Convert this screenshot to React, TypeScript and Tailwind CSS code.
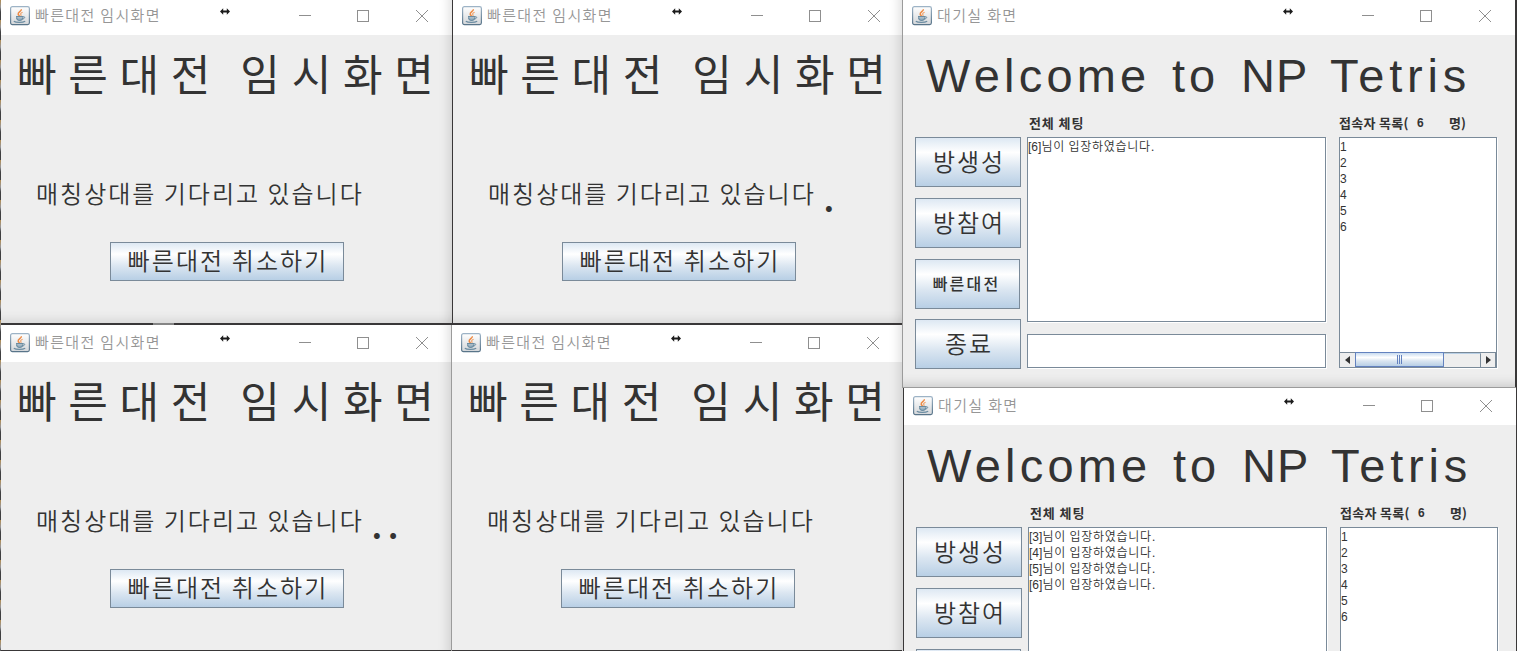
import type { ReactNode } from "react";

const KR = "font-['Noto_Sans_CJK_KR',sans-serif]";
const SWING_FACE =
  "border border-[#7a8a99] bg-[linear-gradient(to_bottom,#dde8f3_0%,#ffffff_30%,#dbe6f1_62%,#b8cfe5_100%)]";
const SUNKEN = "border border-[#7a8a99] bg-white shadow-[1px_1px_0_#ffffff]";

function JavaIcon() {
  return (
    <svg width="20" height="20" viewBox="0 0 20 20" className="shrink-0">
      <defs>
        <linearGradient id="cupTile" x1="0" y1="0" x2="0" y2="1">
          <stop offset="0" stopColor="#ffffff" />
          <stop offset="1" stopColor="#d3d6d9" />
        </linearGradient>
        <linearGradient id="cupEdge" x1="0" y1="0" x2="0" y2="1">
          <stop offset="0" stopColor="#9db3c6" />
          <stop offset="1" stopColor="#587489" />
        </linearGradient>
      </defs>
      <rect x="0.6" y="0.6" width="18.8" height="18" rx="1.8" fill="url(#cupTile)" stroke="url(#cupEdge)" strokeWidth="1.2" />
      <path d="M11.3 3.2C11.9 5.2 7.6 6.2 8.2 8.2C8.4 9 9.2 9.4 9.4 10" fill="none" stroke="#ee8a43" strokeWidth="1.5" />
      <path d="M12.6 6.2C10.6 7 10.2 8 11 8.8C11.3 9.3 11 9.7 10.6 10" fill="none" stroke="#f0a066" strokeWidth="1.1" />
      <path d="M6 10.6H13M6.6 11.5C6.8 14 7.4 14.3 9.6 14.3C12 14.3 12.6 13.8 13 11.5" fill="#9db4c3" stroke="#6b8ca1" strokeWidth="1.3" />
      <path d="M13 10.8C15.5 10.2 15.2 12.6 12.6 13" fill="none" stroke="#6b8ca1" strokeWidth="1" />
      <path d="M3.8 15.2C6 16.8 12.6 16.8 15.2 15.2" fill="none" stroke="#6b8ca1" strokeWidth="1.2" />
    </svg>
  );
}

function ResizeCursor() {
  return (
    <svg width="10" height="7" viewBox="0 0 10 7" className="mr-px mt-[8px] shrink-0">
      <path d="M0 3.5L3.2 0.2V2.5H6.8V0.2L10 3.5L6.8 6.8V4.5H3.2V6.8Z" fill="#1c1c1c" />
    </svg>
  );
}

function WindowControls() {
  return (
    <svg width="130" height="13" viewBox="0 0 130 13" className="mt-[10px] shrink-0" fill="none" stroke="#8f8f8f">
      <path d="M0 5.5H12" />
      <rect x="58.5" y="0.5" width="11" height="11" />
      <path d="M117 0L129 12M129 0L117 12" />
    </svg>
  );
}

interface FrameProps {
  title: string;
  place: string;
  titleInset?: string;
  cursorBox: string;
  shade: string;
  children: ReactNode;
}

function Frame({ title, place, titleInset = "", cursorBox, shade, children }: FrameProps) {
  return (
    <section className={`absolute flex flex-col overflow-hidden bg-[#eeeeee] ${place}`}>
      <header className={`flex shrink-0 bg-white ${titleInset}`}>
        <div className={`flex h-[35px] shrink-0 ${cursorBox}`}>
          <div className="flex h-[32px] items-center gap-[5px] pl-[9px]">
            <JavaIcon />
            <span className={`${KR} -mt-[3px] whitespace-nowrap text-[15px] font-[350] leading-[20px] tracking-[1.35px] text-[#969696]`}>
              {title}
            </span>
          </div>
        </div>
        <ResizeCursor />
        <div className="w-[68px]" />
        <WindowControls />
      </header>
      {children}
      <div className={`pointer-events-none absolute inset-0 ${shade}`} />
    </section>
  );
}

interface MatchWindowProps {
  place: string;
  titleInset?: string;
  shade: string;
  dots: string;
}

function MatchWindow({ place, titleInset, shade, dots }: MatchWindowProps) {
  return (
    <Frame title="빠른대전 임시화면" place={place} titleInset={titleInset} cursorBox="w-[219px]" shade={shade}>
      <div className={`${KR} flex flex-col whitespace-nowrap text-[#333333]`}>
        <h1 className="mt-[5px] h-[64px] pl-[16px] text-[43px] font-normal leading-[64px] tracking-[11.7px] [word-spacing:-3px]">
          빠른대전 임시화면
        </h1>
        <div className="mt-[69px] flex h-[40px] pl-[35px]">
          <p className="text-[24px] font-[350] leading-[40px] tracking-[2px]">매칭상대를 기다리고 있습니다</p>
          <span className="ml-[7px] -mt-px text-[44px] font-normal leading-[40px] tracking-[4px]">{dots}</span>
        </div>
        <button className={`${SWING_FACE} ml-[109px] mt-[29px] h-[39px] w-[234px] pb-[3px] pl-[2px] text-[24px] font-[350] leading-[34px] tracking-[2.1px]`}>
          빠른대전 취소하기
        </button>
      </div>
    </Frame>
  );
}

function ListScrollBar() {
  return (
    <div className="mt-auto flex h-[15px] border-t border-[#7a8a99] bg-[#eeeeee]">
      <div className="flex w-[15px] items-center justify-center">
        <svg width="5" height="8" viewBox="0 0 5 8"><path d="M5 0V8L0 4Z" fill="#333" /></svg>
      </div>
      <div className="-mt-px flex w-[89px] items-center justify-center gap-px border border-[#6382bf] bg-[linear-gradient(to_bottom,#c8dbef_0%,#ffffff_35%,#dbe6f1_60%,#b8cfe5_100%)]">
        <i className="h-[9px] w-px bg-[#6382bf]" />
        <i className="h-[9px] w-px bg-[#6382bf]" />
        <i className="h-[9px] w-px bg-[#6382bf]" />
      </div>
      <div className="grow border-r border-t border-[#7a8a99] border-t-[#b8cfe5]" />
      <div className="flex w-[15px] items-center justify-center border-r border-[#7a8a99]">
        <svg width="5" height="8" viewBox="0 0 5 8"><path d="M0 0V8L5 4Z" fill="#333" /></svg>
      </div>
    </div>
  );
}

const LOBBY_BUTTON = `${SWING_FACE} ${KR} h-[50px] shrink-0 whitespace-nowrap pb-[2px] text-[#333333]`;
const LOBBY_LARGE = `${LOBBY_BUTTON} w-[106px] pl-[2px] text-[24px] font-[350] tracking-[2px]`;
const LABEL = `${KR} h-[24px] whitespace-pre text-[13px] font-bold leading-[20px] text-[#333333]`;

interface LobbyWindowProps {
  place: string;
  titleInset?: string;
  shade?: string;
  messages: string[];
  cropped?: boolean;
}

function LobbyWindow({ place, titleInset, shade = "", messages, cropped = false }: LobbyWindowProps) {
  return (
    <Frame title="대기실 화면" place={place} titleInset={titleInset} cursorBox="w-[380px]" shade={shade}>
      <h1 className="mt-[8px] flex h-[66px] shrink-0 whitespace-nowrap pl-[23px] font-['Liberation_Sans',sans-serif] text-[47px] leading-[66px] text-[#333333]">
        <span className="w-[246px] tracking-[4.2px]">Welcome</span>
        <span className="w-[69px] tracking-[4px]">to</span>
        <span className="w-[89px] tracking-[1px]">NP</span>
        <span className="tracking-[4.8px]">Tetris</span>
      </h1>
      <div className="flex shrink-0 pl-[12px]">
        <div className="flex w-[112px] flex-col pt-[28px]">
          <button className={LOBBY_LARGE}>방생성</button>
          <button className={`${LOBBY_LARGE} mt-[11px]`}>방참여</button>
          <button className={`${LOBBY_BUTTON} mt-[11px] w-[105px] pr-[2px] text-[16px] font-medium tracking-[2.2px]`}>
            {cropped ? null : "빠른대전"}
          </button>
          {cropped ? null : <button className={`${LOBBY_LARGE} mt-[10px]`}>종료</button>}
        </div>
        <div className="flex w-[312px] flex-col pt-[4px]">
          <div className={`${LABEL} pl-[2px] tracking-[0.9px]`}>전체 체팅</div>
          <div className={`${KR} ${SUNKEN} h-[185px] w-[299px] text-[12px] font-[350] leading-[16px] text-[#333333]`}>
            {messages.map((who) => (
              <div key={who} className="h-[16px] whitespace-nowrap tracking-[0.75px]">
                <span className="font-['Liberation_Sans',sans-serif] font-normal tracking-normal">[{who}]</span>님이 입장하였습니다.
              </div>
            ))}
          </div>
          <div className={`${SUNKEN} mt-[12px] h-[34px] w-[299px]`} />
        </div>
        <div className="flex w-[158px] flex-col pt-[4px]">
          <div className={`${LABEL} flex`}>
            <span className="w-[78px] tracking-[0.3px]">접속자 목록(</span>
            <span className="w-[32px] font-['Liberation_Sans',sans-serif] text-[12px] leading-[21px]">6</span>
            <span>명)</span>
          </div>
          <div className={`${SUNKEN} flex h-[231px] flex-col pt-px font-['Liberation_Sans',sans-serif] text-[12px] leading-[16px] text-[#333333]`}>
            {[1, 2, 3, 4, 5, 6].map((n) => (
              <div key={n} className="h-[16px]">{n}</div>
            ))}
            <ListScrollBar />
          </div>
        </div>
      </div>
    </Frame>
  );
}

const SIDE_SHADE = "shadow-[inset_-14px_0_12px_-12px_rgba(0,0,0,0.15)]";
const CORNER_SHADE = "shadow-[inset_-14px_0_12px_-12px_rgba(0,0,0,0.15),inset_0_-14px_12px_-12px_rgba(0,0,0,0.12)]";
const BASE_SHADE = "shadow-[inset_0_-14px_12px_-12px_rgba(0,0,0,0.17)]";

export default function App() {
  return (
    <main className="relative h-[651px] w-[1517px] overflow-hidden bg-[#393738]">
      <div className="absolute left-0 top-0 h-[651px] w-px bg-[repeating-linear-gradient(to_bottom,#b08b50_0px,#98989c_7px,#3f3f40_12px,#3f3f40_20px)]" />
      <div className="absolute left-[153px] top-[323px] h-[2px] w-[21px] bg-[#858585]" />
      <MatchWindow place="left-px top-0 h-[323px] w-[451px]" shade={CORNER_SHADE} dots="" />
      <MatchWindow place="left-[453px] top-0 h-[323px] w-[449px]" shade={CORNER_SHADE} dots="." />
      <MatchWindow place="left-px top-[325px] h-[325px] w-[450px]" titleInset="pt-[2px]" shade={SIDE_SHADE} dots=".." />
      <div className="absolute left-[451px] top-[325px] h-[326px] w-px bg-[#9b9b9b]" />
      <MatchWindow place="left-[452px] top-[325px] h-[325px] w-[450px]" titleInset="pt-[2px]" shade={SIDE_SHADE} dots="" />
      <div className="absolute left-[902px] top-0 h-[388px] w-[614px] bg-[#9b9b9b]" />
      <div className="absolute left-[902px] top-[388px] h-[263px] w-px bg-[#d8d8d8]" />
      <div className="absolute left-[1515px] top-0 h-[387px] w-[2px] bg-[#393738]" />
      <LobbyWindow place="left-[903px] top-0 h-[387px] w-[612px]" shade={BASE_SHADE} messages={["6"]} />
      <LobbyWindow place="left-[904px] top-[388px] h-[263px] w-[612px]" titleInset="pt-[2px]" messages={["3", "4", "5", "6"]} cropped />
    </main>
  );
}
